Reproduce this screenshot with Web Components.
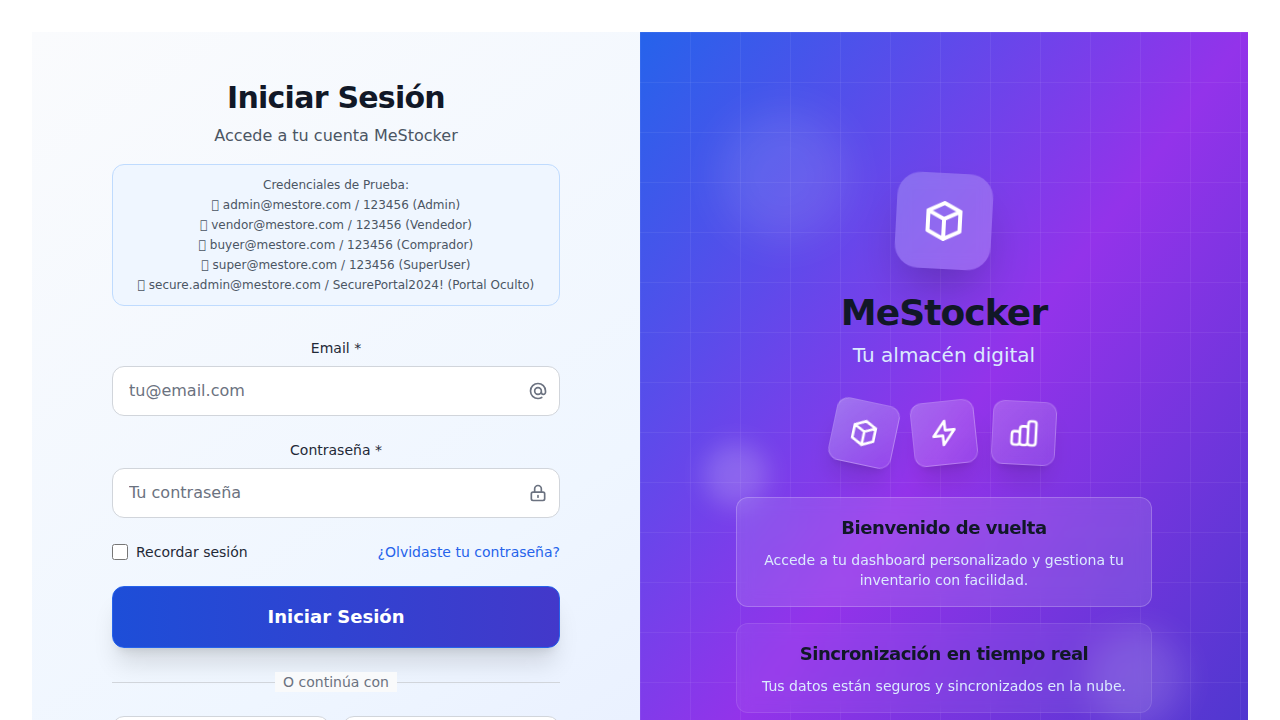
<!DOCTYPE html>
<html lang="es">
<head>
<meta charset="utf-8">
<title>MeStocker - Iniciar Sesión</title>
<style>
html,body{margin:0;height:100%;overflow:hidden;background:#fff}
body{font-family:"DejaVu Sans",sans-serif;color:#111827}
</style>
</head>
<body>
<login-page></login-page>
<script>
const define = (name, html) => customElements.define(name, class extends HTMLElement {
  constructor() {
    super();
    this.attachShadow({ mode: 'open' }).innerHTML =
      '<style>*{box-sizing:border-box}h1,h2,h3,p{margin:0}</style>' + html(this);
  }
});

const ICONS = {
  cube: 'M20 7l-8-4-8 4m16 0l-8 4m8-4v10l-8 4m0-10L4 7m8 4v10M4 7v10l8 4',
  bolt: 'M13 10V3L4 14h7v7l9-11h-7z',
  chart: 'M9 19v-6a2 2 0 00-2-2H5a2 2 0 00-2 2v6a2 2 0 002 2h2a2 2 0 002-2zm0 0V9a2 2 0 012-2h2a2 2 0 012 2v10m-6 0a2 2 0 002 2h2a2 2 0 002-2m0 0V5a2 2 0 012-2h2a2 2 0 012 2v14a2 2 0 01-2 2h-2a2 2 0 01-2-2z',
  at: 'M16 12a4 4 0 10-8 0 4 4 0 008 0zm0 0v1.5a2.5 2.5 0 005 0V12a9 9 0 10-9 9m4.5-1.206a8.959 8.959 0 01-4.5 1.207',
  lock: 'M12 15v2m-6 4h12a2 2 0 002-2v-6a2 2 0 00-2-2H6a2 2 0 00-2 2v6a2 2 0 002 2zm10-10V7a4 4 0 00-8 0v4h8z'
};

define('ui-icon', el => `
<style>:host{display:block;width:20px;height:20px}svg{display:block;width:100%;height:100%}</style>
<svg viewBox="0 0 24 24" fill="none" stroke="currentColor" stroke-width="2" stroke-linecap="round" stroke-linejoin="round"><path d="${ICONS[el.getAttribute('name')]}"/></svg>`);

define('test-credentials', () => `
<style>
:host{display:flex;flex-direction:column;gap:4px;box-sizing:border-box;padding:12px;border:1px solid #bfdbfe;border-radius:12px;background:#eff6ff;font-size:12px;line-height:16px;color:#4b5563;text-align:center}
</style>
<p>Credenciales de Prueba:</p>
<p>&#xE900; admin@mestore.com / 123456 (Admin)</p>
<p>&#xE900; vendor@mestore.com / 123456 (Vendedor)</p>
<p>&#xE900; buyer@mestore.com / 123456 (Comprador)</p>
<p>&#xE900; super@mestore.com / 123456 (SuperUser)</p>
<p>&#xE900; secure.admin@mestore.com / SecurePortal2024! (Portal Oculto)</p>`);

define('form-field', el => `
<style>
:host{display:block}
label{display:block;text-align:center;font-size:14px;line-height:20px;margin-bottom:8px;color:#1f2937}
.box{display:flex;align-items:center;height:50px;border:1px solid #d1d5db;border-radius:12px;background:#fff;padding:0 11px 0 16px}
input{flex:1;min-width:0;border:0;outline:0;padding:0;background:none;font:16px/24px "DejaVu Sans",sans-serif;color:#111827}
input::placeholder{color:#6b7280;opacity:1}
ui-icon{color:#6b7280}
</style>
<label for="i"><slot></slot></label>
<div class="box"><input id="i" type="${el.getAttribute('type')}" placeholder="${el.getAttribute('placeholder')}"><ui-icon name="${el.getAttribute('icon')}"></ui-icon></div>`);

define('primary-button', () => `
<style>
:host{display:block}
button{display:block;width:100%;height:62px;border:1px solid #2563eb;border-radius:12px;background:linear-gradient(to right,#1d4ed8,#4338ca);color:#fff;font:600 18px/28px "DejaVu Sans",sans-serif;box-shadow:0 20px 25px -5px rgba(0,0,0,.12),0 8px 10px -6px rgba(0,0,0,.1)}
</style><button><slot></slot></button>`);

define('text-divider', () => `
<style>
:host{display:flex;align-items:center;font-size:14px;line-height:20px;color:#6b7280}
i{flex:1;height:1px;background:#d1d5db}
span{background:#f9fafb;padding:0 8px}
</style><i></i><span><slot></slot></span><i></i>`);

define('social-button', () => `
<style>
:host{display:block;flex:1;box-sizing:border-box;height:50px;border:1px solid #d1d5db;border-radius:12px;background:#fff}
</style><slot></slot>`);

define('login-form', () => `
<style>
:host{display:flex;flex-direction:column;box-sizing:border-box;padding:48px 80px}
h2{text-align:center;font-size:30px;line-height:36px;font-weight:700;letter-spacing:-.025em;color:#111827}
.sub{text-align:center;margin:8px 0 16px;font-size:16px;line-height:24px;color:#4b5563}
form{display:flex;flex-direction:column;gap:24px;margin-top:32px}
.row{display:flex;align-items:center;justify-content:space-between;font-size:14px;line-height:20px;color:#1f2937}
.row label{display:flex;align-items:center;gap:8px}
input{width:16px;height:16px;margin:0}
a{color:#2563eb;text-decoration:none}
.social{display:flex;gap:12px}
</style>
<h2>Iniciar Sesión</h2>
<p class="sub">Accede a tu cuenta MeStocker</p>
<test-credentials></test-credentials>
<form>
<form-field type="email" placeholder="tu@email.com" icon="at">Email *</form-field>
<form-field type="password" placeholder="Tu contraseña" icon="lock">Contraseña *</form-field>
<div class="row"><label><input type="checkbox">Recordar sesión</label><a>¿Olvidaste tu contraseña?</a></div>
<primary-button>Iniciar Sesión</primary-button>
<text-divider>O continúa con</text-divider>
<div class="social"><social-button></social-button><social-button></social-button></div>
</form>`);

define('float-tile', el => `
<style>
:host{display:flex;align-items:center;justify-content:center;box-sizing:border-box;width:64px;height:64px;border-radius:12px;border:1px solid rgba(255,255,255,.2);background:linear-gradient(to bottom right,rgba(255,255,255,var(--hi,.28)),rgba(255,255,255,.08));backdrop-filter:blur(4px);box-shadow:0 20px 25px -5px rgba(0,0,0,.1),0 8px 10px -6px rgba(0,0,0,.1);color:#fff}
ui-icon{width:32px;height:32px;filter:drop-shadow(0 1px 1px rgba(0,0,0,.05))}
</style><ui-icon name="${el.getAttribute('icon')}"></ui-icon>`);

define('info-card', () => `
<style>
:host{display:block;box-sizing:border-box;padding:16px;border-radius:12px;border:1px solid var(--line);background:var(--fill);backdrop-filter:blur(8px);text-align:center}
h3{font-size:18px;line-height:28px;font-weight:600;letter-spacing:-.025em;color:#111827}
p{margin-top:8px;font-size:14px;line-height:20px;color:#dbeafe}
</style><h3><slot name="title"></slot></h3><p><slot></slot></p>`);

define('brand-panel', () => `
<style>
:host{display:flex;flex-direction:column;align-items:center;justify-content:center;position:relative;overflow:hidden;background:linear-gradient(to bottom right,#2563eb,#9333ea,#4338ca);text-align:center}
.grid{position:absolute;inset:0;background-image:linear-gradient(rgba(255,255,255,.06) 1px,transparent 1px),linear-gradient(90deg,rgba(255,255,255,.06) 1px,transparent 1px);background-size:50px 50px}
.blob{position:absolute;border-radius:50%}
.b1{top:80px;left:80px;width:128px;height:128px;background:rgba(255,255,255,.1);filter:blur(20px)}
.b2{bottom:128px;right:64px;width:96px;height:96px;background:rgba(255,255,255,.14);filter:blur(16px)}
.b3{top:50%;left:64px;width:64px;height:64px;background:rgba(255,255,255,.19);filter:blur(12px)}
.content{position:relative;display:flex;flex-direction:column;align-items:center;width:416px}
.logo{display:flex;align-items:center;justify-content:center;width:96px;height:96px;border-radius:24px;background:rgba(230,228,255,.24);backdrop-filter:blur(8px);box-shadow:0 25px 50px -12px rgba(0,0,0,.25);transform:rotate(3deg);color:#fff}
.logo ui-icon{width:48px;height:48px}
h1{margin-top:24px;font-size:36px;line-height:40px;font-weight:700;letter-spacing:-.025em;color:#111827}
.tag{margin-top:8px;font-size:20px;line-height:28px;color:#dbeafe}
.tiles{display:flex;gap:16px;margin-top:32px}
.cards{display:flex;flex-direction:column;gap:16px;margin-top:32px;width:100%}
.a{--fill:rgba(255,255,255,.11);--line:rgba(255,255,255,.22)}
.b{--fill:rgba(255,255,255,.05);--line:rgba(255,255,255,.1)}
</style>
<div class="grid"></div>
<div class="blob b1"></div><div class="blob b2"></div><div class="blob b3"></div>
<div class="content">
<div class="logo"><ui-icon name="cube"></ui-icon></div>
<h1>MeStocker</h1>
<p class="tag">Tu almacén digital</p>
<div class="tiles">
<float-tile icon="cube" style="transform:rotate(12deg)"></float-tile>
<float-tile icon="bolt" style="transform:rotate(-6deg);--hi:.24"></float-tile>
<float-tile icon="chart" style="transform:rotate(3deg);--hi:.2"></float-tile>
</div>
<div class="cards">
<info-card class="a"><span slot="title">Bienvenido de vuelta</span>Accede a tu dashboard personalizado y gestiona tu inventario con facilidad.</info-card>
<info-card class="b"><span slot="title">Sincronización en tiempo real</span>Tus datos están seguros y sincronizados en la nube.</info-card>
</div>
</div>`);

define('login-page', () => `
<style>
:host{display:block;box-sizing:border-box;height:720px;overflow:hidden;padding:32px 32px 0}
main{display:grid;grid-template-columns:1fr 1fr;grid-template-rows:822px;background:linear-gradient(to bottom right,#fafbfd,#eff6ff,#e0e7ff)}
</style><main><login-form></login-form><brand-panel></brand-panel></main>`);
</script>
</body>
</html>
